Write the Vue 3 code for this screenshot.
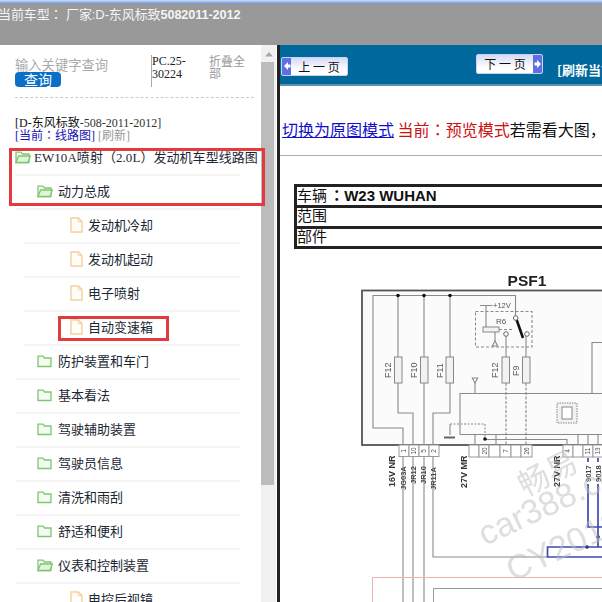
<template>
  <div class="page">
    <div class="topbar">
      <div class="topline"></div>
      <div class="crumb">当前车型<span class="colon">：</span> 厂家:D-东风标致<b>5082011-2012</b></div>
    </div>
    <div class="main">
      <aside class="side">
        <div class="search">
          <div class="search-left">
            <div class="hint">输入关键字查询</div>
            <button class="query">查询</button>
          </div>
          <div class="pc">PC.25-30224</div>
          <div class="fold">折叠全部</div>
        </div>
        <div class="current">
          <div>[D-东风标致<span class="thin">-508-2011-2012]</span></div>
          <div><span class="now">[当前<span class="colon">：</span>线路图]</span> <span class="refresh">[刷新]</span></div>
        </div>
        <ul class="tree">
          <li v-for="row in rows" :key="row.name" class="row" :class="'lv' + row.level">
            <svg v-if="row.type !== 'file'" class="ico" width="16" height="14" viewBox="0 0 16 14">
              <path d="M1 12.5V2.2h5l1.500 1.800H14v8.500z" fill="#f4fbf1" stroke="#7fc672" stroke-width="1.300" />
              <path v-if="row.type === 'open'" d="M1 12.500l2.600-6.500H15.300l-2.400 6.500z" fill="#e3f4dd" stroke="#7fc672" stroke-width="1.300" />
            </svg>
            <svg v-else class="ico file" width="13" height="16" viewBox="0 0 13 16">
              <path d="M1 1h7.500L12 4.600V15H1z" fill="#fffdf8" stroke="#f5cf9c" stroke-width="1.400" />
              <path d="M8.300 1v3.700H12" fill="none" stroke="#f5cf9c" stroke-width="1" />
            </svg>
            <span>{{ row.name }}</span>
          </li>
        </ul>
        <div class="mark mark-a"></div>
        <div class="mark mark-b"></div>
      </aside>
      <div class="scrollbar">
        <div class="scroll-up">
          <svg width="10" height="6" viewBox="0 0 10 6"><path d="M1 5.500L5 1l4 4.500z" fill="#a8a8a8" /></svg>
        </div>
        <div class="thumb"></div>
      </div>
      <section class="content">
        <div class="nav">
          <a class="pager prev">
            <span class="arrow"><svg width="8" height="10" viewBox="0 0 8 10"><path d="M1 5l4-4v2.400h2.500v3.200H5V9z" fill="#fff" /></svg></span>
            <span class="pager-text">上 一 页</span>
          </a>
          <a class="pager next">
            <span class="pager-text">下 一 页</span>
            <span class="arrow"><svg width="8" height="10" viewBox="0 0 8 10"><path d="M7 5L3 1v2.400H.5v3.200H3V9z" fill="#fff" /></svg></span>
          </a>
          <b class="reload">[刷新当前页]</b>
        </div>
        <div class="mode">
          <a class="switch">切换为原图模式</a> <span class="red">当前<span class="colon">：</span>预览模式</span>若需看大图，请点击切换
        </div>
        <div class="info">
          <div class="info-row">车辆 <b><span class="colon">：</span>W23 WUHAN</b></div>
          <div class="info-row">范围</div>
          <div class="info-row">部件</div>
        </div>
        <svg class="diagram" width="322" height="344" viewBox="280 258 322 344" font-family="'Liberation Sans', sans-serif">
          <text x="527" y="286" text-anchor="middle" font-size="15.500" font-weight="700" fill="#222">PSF1</text>
          <rect x="362" y="290.500" width="260" height="154.500" fill="#fbfbfb" stroke="#555" stroke-width="1.800" />

          <g fill="none" stroke="#8a8a8a" stroke-width="1.100">
            <path d="M515.500 318V295.500H373V428H403V602" />
            <path d="M398 295.500V413H413V602" />
            <path d="M424 295.500V602" />
            <path d="M450 295.500V413H433V557H547" />
            <path d="M460 434.500V393.500H602M460 434.500H602" />
            <path d="M592 393V342.500H602" />
            <path d="M475 383V393M475 434V445M496 434V445M567 439V445M578 434V445M588 434V445M598 434V445" />
            <path d="M506 334V357M526 334V357" />
            <path d="M486 327V305.500M480 305.500H492.500" />
            <path d="M495 332V341" />
            <path d="M450 424H485" stroke-dasharray="2 1.500" />
            <path d="M450 424V435" />
            <path d="M485 424V439" stroke-dasharray="2 1.500" />
            <path d="M485 439.500H567" />
            <path d="M506 383V445M526 383V445" stroke-dasharray="3 1.500" />
            <path d="M499 329.500H514" stroke-dasharray="3 2" />
            <path d="M475.500 311.500H532V347H475.500z" stroke-dasharray="3 2" />
            <path d="M475 383l-2.700-5h5.400zM495 341l-2.700 5h5.400z" />
          </g>

          <g fill="#f2f2f2" stroke="#888" stroke-width="1">
            <rect x="394.500" y="357" width="7.500" height="26" />
            <rect x="420.500" y="357" width="7.500" height="26" />
            <rect x="446" y="357" width="7.500" height="26" />
            <rect x="502" y="357" width="7.500" height="26" />
            <rect x="522.500" y="357" width="7.500" height="26" />
            <rect x="483" y="327" width="16" height="5" />
            <rect x="557" y="403" width="20" height="20" stroke-dasharray="1.500 1" />
            <rect x="562" y="407" width="10" height="12" fill="#fff" />
          </g>

          <path d="M516 318L523 338" stroke="#111" stroke-width="2.600" />
          <g fill="#fff" stroke="#666" stroke-width="1">
            <circle cx="515.700" cy="318" r="2.300" />
            <circle cx="506" cy="334" r="2.300" />
            <circle cx="527" cy="334" r="2.300" />
          </g>
          <g fill="#111">
            <circle cx="398" cy="295.500" r="1.800" />
            <circle cx="424" cy="295.500" r="1.800" />
            <circle cx="450" cy="295.500" r="1.800" />
            <circle cx="485" cy="439" r="1.800" />
            <circle cx="587" cy="547" r="1.800" />
            <circle cx="598" cy="537" r="1.800" />
          </g>
          <rect x="444" y="436.500" width="11" height="2" fill="#666" />

          <g font-size="7.500" fill="#555">
            <text x="493" y="308">+12V</text>
            <text x="496" y="323.500" font-size="8">R6</text>
          </g>
          <g font-size="9" fill="#555">
            <text transform="translate(391 378) rotate(-90)">F12</text>
            <text transform="translate(417 378) rotate(-90)">F10</text>
            <text transform="translate(443 378) rotate(-90)">F11</text>
            <text transform="translate(498 378) rotate(-90)">F12</text>
            <text transform="translate(519 376) rotate(-90)">F9</text>
          </g>

          <g fill="#fff" stroke="#999" stroke-width="1">
            <rect x="399" y="445" width="10" height="11.500" />
            <rect x="409" y="445" width="10" height="11.500" />
            <rect x="419" y="445" width="10" height="11.500" />
            <rect x="429" y="445" width="10" height="11.500" />
            <rect x="469" y="445" width="10" height="12" />
            <rect x="479" y="445" width="10" height="12" />
            <rect x="489" y="445" width="11" height="12" />
            <rect x="500" y="445" width="11" height="12" />
            <rect x="511" y="445" width="10" height="12" />
            <rect x="521" y="445" width="11" height="12" />
            <rect x="563" y="445" width="10" height="12" />
            <rect x="573" y="445" width="10" height="12" />
            <rect x="583" y="445" width="10" height="12" />
            <rect x="593" y="445" width="10" height="12" />
          </g>
          <g font-size="6.500" fill="#555" text-anchor="middle">
            <text transform="translate(406 451) rotate(-90)">1</text>
            <text transform="translate(416 451) rotate(-90)">10</text>
            <text transform="translate(426 451) rotate(-90)">5</text>
            <text transform="translate(436 451) rotate(-90)">2</text>
            <text transform="translate(487 451) rotate(-90)">20</text>
            <text transform="translate(508 451) rotate(-90)">7</text>
            <text transform="translate(529 451) rotate(-90)">26</text>
            <text transform="translate(570 451) rotate(-90)">4</text>
            <text transform="translate(590 451) rotate(-90)">11</text>
            <text transform="translate(600 451) rotate(-90)">13</text>
          </g>
          <g font-size="9" font-weight="700" fill="#333">
            <text transform="translate(395 487) rotate(-90)">16V NR</text>
            <text transform="translate(467 488) rotate(-90)">27V MR</text>
            <text transform="translate(560 487) rotate(-90)">27V NR</text>
          </g>
          <g font-size="7.500" font-weight="700" fill="#444">
            <text transform="translate(406 490) rotate(-90)">JG03A</text>
            <text transform="translate(416 484) rotate(-90)">JR12</text>
            <text transform="translate(426 484) rotate(-90)">JR10</text>
            <text transform="translate(436 490) rotate(-90)">JR11A</text>
            <text transform="translate(591 482) rotate(-90)">9017</text>
            <text transform="translate(601 482) rotate(-90)">9018</text>
          </g>

          <g fill="none" stroke="#3d4bb0" stroke-width="1.700">
            <path d="M588 484V527H602" />
            <path d="M598 484V547" />
            <path d="M602 547H547.500V557H602" />
            <path d="M588 458V462M598 458V462" />
          </g>
          <path d="M372.500 602V577.500H602" fill="none" stroke="#e9b5ac" stroke-width="1" />
          <path d="M433.500 602V588.500H602" fill="none" stroke="#999" stroke-width="1" />

          <g font-family="'Liberation Sans', 'Noto Sans CJK SC', sans-serif" fill="#bdbdbd" fill-opacity="0.5">
            <text transform="translate(525 497) rotate(-27)" font-size="31">畅易</text>
            <text transform="translate(485 546) rotate(-25)" font-size="34">car388.com</text>
            <text transform="translate(513 582) rotate(-25)" font-size="34">CY2012</text>
          </g>
        </svg>
      </section>
    </div>
  </div>
</template>

<script setup>
const rows = [
  { name: 'EW10A喷射（2.0L）发动机车型线路图', level: 0, type: 'open' },
  { name: '动力总成', level: 1, type: 'open' },
  { name: '发动机冷却', level: 2, type: 'file' },
  { name: '发动机起动', level: 2, type: 'file' },
  { name: '电子喷射', level: 2, type: 'file' },
  { name: '自动变速箱', level: 2, type: 'file' },
  { name: '防护装置和车门', level: 1, type: 'folder' },
  { name: '基本看法', level: 1, type: 'folder' },
  { name: '驾驶辅助装置', level: 1, type: 'folder' },
  { name: '驾驶员信息', level: 1, type: 'folder' },
  { name: '清洗和雨刮', level: 1, type: 'folder' },
  { name: '舒适和便利', level: 1, type: 'folder' },
  { name: '仪表和控制装置', level: 1, type: 'open' },
  { name: '电控后视镜', level: 2, type: 'file' }
]
</script>

<style scoped>
.page {
  width: 602px;
  height: 602px;
  overflow: hidden;
  display: flex;
  flex-direction: column;
  background: #fff;
  font-family: "Liberation Serif", "Noto Sans CJK SC", serif;
  color: #1c2733;
}
.colon {
  font-family: "Noto Sans CJK TC", sans-serif;
}
.topbar {
  height: 45px;
  flex: none;
  background: #999;
  color: #f4f4f4;
  font-family: "Liberation Sans", "Noto Sans CJK SC", sans-serif;
  font-size: 13px;
}
.topline {
  height: 4px;
  background: linear-gradient(#cfe0f5, #6e8fd0);
}
.crumb {
  margin: 2px 0 0 -2px;
  line-height: 16px;
  white-space: pre;
  letter-spacing: -0.1px;
}
.crumb b {
  font-size: 12.700px;
}
.main {
  flex: 1;
  display: flex;
  min-height: 0;
}
.side {
  width: 261px;
  flex: none;
  position: relative;
  background: #fff;
}
.search {
  display: flex;
  margin: 10px 7px 0 15px;
  height: 42px;
  border-bottom: 1px dashed #ccc;
}
.search-left {
  width: 136px;
  flex: none;
  padding-top: 2px;
}
.hint {
  font-family: "Noto Sans CJK SC", sans-serif;
  font-size: 13.300px;
  line-height: 15px;
  white-space: nowrap;
  color: #aaa;
}
.query {
  display: block;
  width: 46px;
  height: 15px;
  padding: 0;
  border: none;
  border-radius: 4px;
  background: #0a6fc6;
  color: #fff;
  font-family: "Noto Sans CJK SC", sans-serif;
  font-size: 14px;
  line-height: 15px;
}
.pc {
  width: 58px;
  height: 32px;
  flex: none;
  border-left: 1px solid #aaa;
  font-size: 12px;
  line-height: 13px;
  color: #222;
  word-break: break-word;
}
.fold {
  width: 37px;
  flex: none;
  margin-left: -1px;
  font-family: "Noto Sans CJK SC", sans-serif;
  font-size: 12px;
  line-height: 12px;
  color: #999;
}
.current {
  margin: 19px 0 0 15px;
  font-size: 12px;
  line-height: 12px;
  color: #111;
  height: 25px;
}
.thin {
  color: #333;
}
.now {
  color: #1515b0;
}
.refresh {
  color: #999;
}
.tree {
  list-style: none;
  margin: 0;
  padding: 0;
  font-family: "Liberation Serif", "Noto Sans CJK SC", serif;
  font-size: 13px;
}
.row {
  height: 34px;
  box-sizing: border-box;
  display: flex;
  align-items: center;
  gap: 3px;
  padding-bottom: 3px;
  border-bottom: 2px solid #f5f5f5;
  margin-right: 21px;
  white-space: nowrap;
}
.lv0 {
  margin-left: 15px;
  letter-spacing: 0.05px;
}
.lv1 {
  margin-left: 16px;
  padding-left: 21px;
  gap: 5px;
}
.lv2 {
  margin-left: 24px;
  padding-left: 46px;
  gap: 5px;
}
.ico {
  flex: none;
}
.mark {
  position: absolute;
  border: 3px solid #e23b3f;
  box-sizing: border-box;
}
.mark-a {
  left: 9px;
  top: 103px;
  width: 256px;
  height: 58px;
}
.mark-b {
  left: 58px;
  top: 271px;
  width: 111px;
  height: 25px;
}
.scrollbar {
  width: 15px;
  flex: none;
  background: #f1f1f1;
}
.scroll-up {
  height: 17px;
  display: flex;
  align-items: center;
  justify-content: center;
}
.thumb {
  width: 13px;
  height: 423px;
  background: #bcbcbc;
}
.content {
  flex: 1;
  min-width: 0;
  overflow: hidden;
  border-left: 3px solid #222;
  margin-left: 1px;
}
.nav {
  height: 41px;
  box-sizing: border-box;
  background: #00689c;
  border-bottom: 2px solid #5f93ad;
  display: flex;
  align-items: center;
  white-space: nowrap;
  padding-left: 1px;
}
.pager {
  display: flex;
  align-items: stretch;
  width: 67px;
  height: 19px;
  flex: none;
  box-sizing: border-box;
  border: 1px solid #c6d4ee;
  border-radius: 2px;
  overflow: hidden;
  background: linear-gradient(#d6d9f6, #fff 70%);
  font-family: "Noto Sans CJK SC", sans-serif;
  font-size: 12px;
  line-height: 17px;
  color: #111;
}
.prev {
  margin-top: 3px;
}
.next {
  margin: -2px 0 0 128px;
  height: 20px;
}
.arrow {
  width: 9px;
  flex: none;
  background: #5f6ee0;
  display: flex;
  align-items: center;
  justify-content: center;
}
.pager-text {
  flex: 1;
  text-align: center;
}
.reload {
  margin: 10px 0 0 14px;
  font-family: "Noto Sans CJK SC", sans-serif;
  font-size: 13px;
  color: #fff;
}
.mode {
  height: 70px;
  box-sizing: border-box;
  padding: 32px 0 0 2px;
  border-bottom: 1px solid #aaa;
  font-family: "Noto Sans CJK SC", sans-serif;
  font-size: 16px;
  line-height: 22px;
  color: #111;
  white-space: nowrap;
}
.switch {
  color: #1111cc;
  text-decoration: underline;
}
.red {
  color: #cc1111;
}
.info {
  margin: 28px 0 0 14px;
  width: 340px;
  border: 3px solid #222;
  box-sizing: border-box;
  height: 65px;
  font-family: "Liberation Sans", "Noto Sans CJK SC", sans-serif;
  font-size: 15px;
  color: #111;
}
.info-row {
  height: 18px;
  line-height: 16px;
  border-bottom: 3px solid #222;
}
.info-row b {
  margin-left: -2px;
}
.info-row:last-child {
  height: 17px;
  border-bottom: none;
}
.diagram {
  display: block;
  margin: 9px 0 0 0;
  filter: blur(0.4px);
}
</style>

<style>
html, body {
  margin: 0;
  background: #fff;
}
</style>
